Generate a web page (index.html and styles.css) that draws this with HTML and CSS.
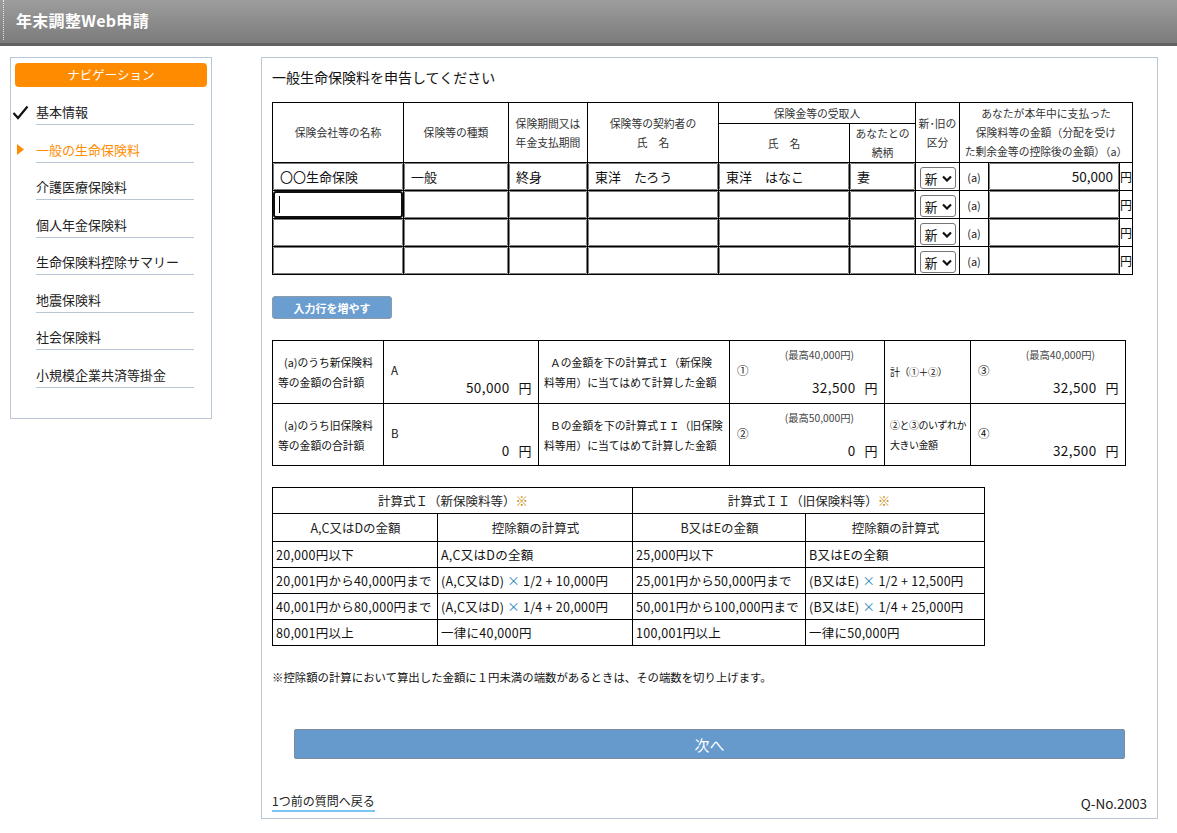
FILE: index.html
```html
<!DOCTYPE html>
<html lang="ja">
<head>
<meta charset="utf-8">
<title>年末調整Web申請</title>
<link rel="stylesheet" href="styles.css">
</head>
<body>
<header class="topbar">
  <div class="topbar-inner">年末調整Web申請</div>
</header>
<div class="layout">
  <aside class="sidebar">
    <div class="nav-head">ナビゲーション</div>
    <ul class="nav">
      <li class="nav-item done"><span class="mark"><svg width="17" height="15" viewBox="0 0 17 15"><polyline points="1.5,8 6,13 15.5,1.5" fill="none" stroke="#111" stroke-width="2.2"/></svg></span>基本情報</li>
      <li class="nav-item current"><span class="mark"><svg width="8" height="11" viewBox="0 0 8 11"><polygon points="0,0 7,5.5 0,11" fill="#ff8c00"/></svg></span>一般の生命保険料</li>
      <li class="nav-item">介護医療保険料</li>
      <li class="nav-item">個人年金保険料</li>
      <li class="nav-item">生命保険料控除サマリー</li>
      <li class="nav-item">地震保険料</li>
      <li class="nav-item">社会保険料</li>
      <li class="nav-item">小規模企業共済等掛金</li>
    </ul>
  </aside>
  <main class="panel">
    <h1 class="title">一般生命保険料を申告してください</h1>
    <table class="ins">
      <colgroup>
        <col style="width:131px"><col style="width:105px"><col style="width:79px"><col style="width:131px"><col style="width:131px"><col style="width:66px"><col style="width:44px"><col style="width:29px"><col style="width:131px"><col style="width:13px">
      </colgroup>
      <tr class="h1">
        <th rowspan="2">保険会社等の名称</th>
        <th rowspan="2">保険等の種類</th>
        <th rowspan="2">保険期間又は<br>年金支払期間</th>
        <th rowspan="2">保険等の契約者の<br>氏　名</th>
        <th colspan="2">保険金等の受取人</th>
        <th rowspan="2">新･旧の<br>区分</th>
        <th rowspan="2" colspan="3" class="paid">あなたが本年中に支払った<br>保険料等の金額（分配を受け<br>た剰余金等の控除後の金額）（a）</th>
      </tr>
      <tr class="h2">
        <th>氏　名</th>
        <th>あなたとの<br>続柄</th>
      </tr>
      <tr>
        <td><div class="inp">〇〇生命保険</div></td>
        <td><div class="inp">一般</div></td>
        <td><div class="inp">終身</div></td>
        <td><div class="inp">東洋　たろう</div></td>
        <td><div class="inp">東洋　はなこ</div></td>
        <td><div class="inp">妻</div></td>
        <td class="c"><div class="sel">新<svg width="10" height="7" viewBox="0 0 10 7"><polyline points="1,1.5 5,5.5 9,1.5" fill="none" stroke="#111" stroke-width="2.2"/></svg></div></td>
        <td class="a">(a)</td>
        <td><div class="inp num">50,000</div></td>
        <td class="yen">円</td>
      </tr>
      <tr>
        <td><div class="inp focus"><span class="caret"></span></div></td>
        <td><div class="inp"></div></td>
        <td><div class="inp"></div></td>
        <td><div class="inp"></div></td>
        <td><div class="inp"></div></td>
        <td><div class="inp"></div></td>
        <td class="c"><div class="sel">新<svg width="10" height="7" viewBox="0 0 10 7"><polyline points="1,1.5 5,5.5 9,1.5" fill="none" stroke="#111" stroke-width="2.2"/></svg></div></td>
        <td class="a">(a)</td>
        <td><div class="inp num"></div></td>
        <td class="yen">円</td>
      </tr>
      <tr>
        <td><div class="inp"></div></td>
        <td><div class="inp"></div></td>
        <td><div class="inp"></div></td>
        <td><div class="inp"></div></td>
        <td><div class="inp"></div></td>
        <td><div class="inp"></div></td>
        <td class="c"><div class="sel">新<svg width="10" height="7" viewBox="0 0 10 7"><polyline points="1,1.5 5,5.5 9,1.5" fill="none" stroke="#111" stroke-width="2.2"/></svg></div></td>
        <td class="a">(a)</td>
        <td><div class="inp num"></div></td>
        <td class="yen">円</td>
      </tr>
      <tr>
        <td><div class="inp"></div></td>
        <td><div class="inp"></div></td>
        <td><div class="inp"></div></td>
        <td><div class="inp"></div></td>
        <td><div class="inp"></div></td>
        <td><div class="inp"></div></td>
        <td class="c"><div class="sel">新<svg width="10" height="7" viewBox="0 0 10 7"><polyline points="1,1.5 5,5.5 9,1.5" fill="none" stroke="#111" stroke-width="2.2"/></svg></div></td>
        <td class="a">(a)</td>
        <td><div class="inp num"></div></td>
        <td class="yen">円</td>
      </tr>
    </table>

    <button class="add-btn" type="button">入力行を増やす</button>

    <table class="calc">
      <colgroup>
        <col style="width:111px"><col style="width:155px"><col style="width:191px"><col style="width:155px"><col style="width:86px"><col style="width:155px">
      </colgroup>
      <tr>
        <td class="lbl"><span class="ind">(a)のうち新保険料</span><br>等の金額の合計額</td>
        <td class="val"><div class="cap"></div><div class="key">A</div><div class="amt">50,000<span class="u">円</span></div></td>
        <td class="lbl"><span class="ind">Ａの金額を下の計算式Ｉ（新保険</span><br>料等用）に当てはめて計算した金額</td>
        <td class="val"><div class="cap">(最高40,000円)</div><div class="key">①</div><div class="amt">32,500<span class="u">円</span></div></td>
        <td class="lbl narrow">計（①＋②）</td>
        <td class="val"><div class="cap">(最高40,000円)</div><div class="key">③</div><div class="amt">32,500<span class="u">円</span></div></td>
      </tr>
      <tr>
        <td class="lbl"><span class="ind">(a)のうち旧保険料</span><br>等の金額の合計額</td>
        <td class="val"><div class="cap"></div><div class="key">B</div><div class="amt">0<span class="u">円</span></div></td>
        <td class="lbl"><span class="ind">Ｂの金額を下の計算式ＩＩ（旧保険</span><br>料等用）に当てはめて計算した金額</td>
        <td class="val"><div class="cap">(最高50,000円)</div><div class="key">②</div><div class="amt">0<span class="u">円</span></div></td>
        <td class="lbl narrow">②と③のいずれか<br>大きい金額</td>
        <td class="val"><div class="cap"></div><div class="key">④</div><div class="amt">32,500<span class="u">円</span></div></td>
      </tr>
    </table>

    <table class="formula">
      <colgroup>
        <col style="width:165px"><col style="width:195px"><col style="width:173px"><col style="width:179px">
      </colgroup>
      <tr class="fh">
        <th colspan="2">計算式Ｉ（新保険料等）<span class="kome">※</span></th>
        <th colspan="2">計算式ＩＩ（旧保険料等）<span class="kome">※</span></th>
      </tr>
      <tr class="fh2">
        <th>A,C又はDの金額</th>
        <th>控除額の計算式</th>
        <th>B又はEの金額</th>
        <th>控除額の計算式</th>
      </tr>
      <tr>
        <td>20,000円以下</td>
        <td>A,C又はDの全額</td>
        <td>25,000円以下</td>
        <td>B又はEの全額</td>
      </tr>
      <tr>
        <td>20,001円から40,000円まで</td>
        <td>(A,C又はD) <span class="op">×</span> 1/2 + 10,000円</td>
        <td>25,001円から50,000円まで</td>
        <td>(B又はE) <span class="op">×</span> 1/2 + 12,500円</td>
      </tr>
      <tr>
        <td>40,001円から80,000円まで</td>
        <td>(A,C又はD) <span class="op">×</span> 1/4 + 20,000円</td>
        <td>50,001円から100,000円まで</td>
        <td>(B又はE) <span class="op">×</span> 1/4 + 25,000円</td>
      </tr>
      <tr>
        <td>80,001円以上</td>
        <td>一律に40,000円</td>
        <td>100,001円以上</td>
        <td>一律に50,000円</td>
      </tr>
    </table>

    <p class="remark">※控除額の計算において算出した金額に１円未満の端数があるときは、その端数を切り上げます。</p>

    <button class="next-btn" type="button">次へ</button>

    <div class="foot">
      <a class="back" href="#">1つ前の質問へ戻る</a>
      <span class="qno">Q-No.2003</span>
    </div>
  </main>
</div>
</body>
</html>
```

FILE: styles.css
```css
* { box-sizing: border-box; }
html, body { margin: 0; padding: 0; }
body {
  font-family: "Noto Sans CJK JP", "Noto Sans", sans-serif;
  color: #111;
  background: #fff;
  width: 1177px;
}

/* top bar */
.topbar {
  height: 46px;
  background: linear-gradient(#9d9d9d, #7b7b7b);
  border-bottom: 3px solid #616161;
  padding: 0 0 3px 3px;
}
.topbar-inner {
  height: 40px;
  border-left: 1px dotted #e8e8e8;
  padding-left: 12px;
  display: flex;
  align-items: center;
  color: #fff;
  font-size: 16px;
  font-weight: bold;
  letter-spacing: 0.3px;
}

.layout {
  display: flex;
  align-items: flex-start;
  gap: 49px;
  padding: 11px 0 0 10px;
}

/* sidebar */
.sidebar {
  width: 202px;
  height: 362px;
  border: 1px solid #b9c6d3;
  padding: 5px 4px 0 4px;
}
.nav-head {
  height: 24px;
  background: #ff8c00;
  border-radius: 4px;
  color: #fff;
  font-size: 12.5px;
  line-height: 24px;
  text-align: center;
}
.nav {
  list-style: none;
  margin: 15px 0 0 0;
  padding: 0;
}
.nav-item {
  position: relative;
  margin-left: 21px;
  width: 158px;
  font-size: 13px;
  line-height: 20px;
  padding-bottom: 2px;
  border-bottom: 1px solid #b9c6d3;
  margin-bottom: 14.5px;
  color: #222;
}
.nav-item.current { color: #ff8c00; }
.mark {
  position: absolute;
  top: 0;
  height: 20px;
  display: flex;
  align-items: center;
}
.done .mark { left: -24px; }
.current .mark { left: -19px; }

/* main panel */
.panel {
  width: 897px;
  height: 762px;
  border: 1px solid #b9c6d3;
  padding: 9px 10px 0 10px;
}
.title {
  margin: 0;
  font-size: 14px;
  font-weight: normal;
  line-height: 20px;
  color: #111;
}

table { border-collapse: collapse; table-layout: fixed; }

/* insurance table */
.ins {
  margin-top: 15px;
  width: 860px;
}
.ins th, .ins td {
  border: 1px solid #000;
  padding: 0;
}
.ins th {
  font-weight: normal;
  font-size: 10.8px;
  line-height: 20px;
  color: #333;
  text-align: center;
  white-space: nowrap;
  overflow: hidden;
}
.ins tr.h1 { height: 21px; }
.ins tr.h1 th[rowspan] { line-height: 19px; }
.ins tr.h2 { height: 39px; }
.ins tr.h2 th { line-height: 19px; }
.ins td { height: 28px; }
.inp {
  height: 27px;
  border: 1px solid #7b7b7b;
  border-radius: 1px;
  font-size: 13px;
  line-height: 25px;
  padding: 0 6px;
  white-space: nowrap;
  overflow: hidden;
}
.inp.num {
  text-align: right;
  padding-right: 5px;
  font-size: 13.5px;
}
.inp.focus {
  border: 2px solid #101010;
  border-radius: 3px;
  padding-left: 4px;
  display: flex;
  align-items: center;
}
.caret {
  display: block;
  width: 1px;
  height: 17px;
  background: #000;
}
.ins td.c { text-align: center; }
.sel {
  display: inline-flex;
  align-items: center;
  justify-content: space-between;
  width: 36px;
  height: 22px;
  border: 1px solid #767676;
  border-radius: 3px;
  padding: 0 3px 0 4px;
  font-size: 13px;
  vertical-align: middle;
}
.ins td.a {
  font-size: 11px;
  text-align: center;
  color: #222;
}
.ins td.yen {
  font-size: 12px;
  overflow: hidden;
  white-space: nowrap;
}

/* add row button */
.add-btn {
  display: block;
  margin-top: 21px;
  width: 120px;
  height: 23px;
  background: #6a9dd0;
  border: 1px solid #8d9aa8;
  border-radius: 3px;
  color: #fff;
  font-family: inherit;
  font-size: 11px;
  font-weight: bold;
  padding: 0;
}

/* calc table */
.calc {
  margin-top: 21px;
  width: 853px;
}
.calc td {
  border: 1px solid #000;
  height: 63px;
}
.calc tr + tr td { height: 62px; }
.calc td.lbl {
  font-size: 10.8px;
  line-height: 20px;
  padding: 0 0 0 5px;
  white-space: nowrap;
  vertical-align: middle;
}
.calc .ind { padding-left: 6px; }
.calc td.narrow {
  font-size: 10px;
  letter-spacing: -0.5px;
}
.calc td.val {
  vertical-align: top;
  padding: 6px 6px 0 7px;
}
.cap {
  height: 16px;
  font-size: 10.3px;
  line-height: 16px;
  color: #444;
  text-align: right;
  padding-right: 24px;
}
.key {
  font-size: 11.5px;
  line-height: 14px;
}
.amt {
  font-size: 13.5px;
  line-height: 20px;
  text-align: right;
  letter-spacing: 0.4px;
}
.amt .u {
  margin-left: 9px;
  font-size: 13px;
}

/* formula table */
.formula {
  margin-top: 21px;
  width: 712px;
}
.formula th, .formula td {
  border: 1px solid #000;
  font-size: 12.5px;
  font-weight: normal;
  white-space: nowrap;
  overflow: hidden;
  height: 26px;
  padding: 0 2px 0 3px;
}
.formula td { letter-spacing: 0.25px; }
.formula th { text-align: center; color: #222; }
.formula tr.fh2 th { height: 28px; }
.formula td { text-align: left; }
.kome { color: #c48a00; }
.op { color: #2e8bc0; }

.remark {
  margin: 21px 0 0 0;
  font-size: 11.4px;
  line-height: 20px;
  color: #111;
}

.next-btn {
  display: block;
  margin: 42px 0 0 22px;
  width: 831px;
  height: 30px;
  background: #6699cc;
  border: 1px solid #7d8a99;
  border-radius: 2px;
  color: #fff;
  font-family: inherit;
  font-size: 15px;
  padding: 0;
}

.foot {
  margin-top: 33px;
  display: flex;
  justify-content: space-between;
  align-items: flex-end;
  font-size: 12px;
  line-height: 18px;
}
.back {
  color: #222;
  text-decoration: none;
  border-bottom: 2px solid #7cc4f4;
}
.qno { color: #222; font-size: 13.5px; }
```
